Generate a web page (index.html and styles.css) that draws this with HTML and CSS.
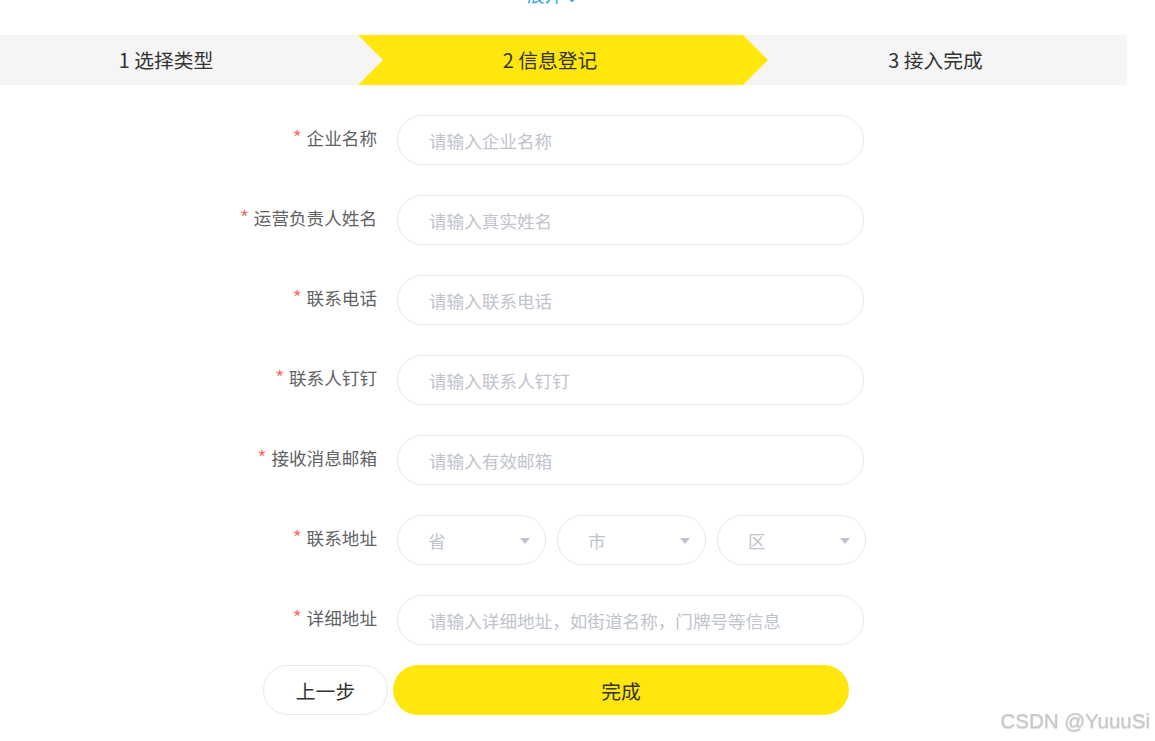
FILE: index.html
```html
<!DOCTYPE html>
<html lang="zh-CN">
  <head>
    <meta charset="UTF-8" />
    <meta name="viewport" content="width=device-width, initial-scale=1.0" />
    <title>信息登记</title>
    <link rel="stylesheet" href="styles.css">
  </head>
  <body>
    <div class="page">
      <!-- Toggle link (scrolled partly off) -->
      <div class="toggle">
        <a class="toggle-link">展开 <span class="chev">&#8964;</span></a>
      </div>

      <!-- Steps -->
      <div class="steps">
        <div class="step step-first">1 选择类型</div>
        <div class="step step-active">2 信息登记</div>
        <div class="step step-last">3 接入完成</div>
      </div>

      <!-- Form -->
      <form class="form">
        <div class="form-row">
          <label class="form-label"><span class="req">*</span>企业名称</label>
          <input class="field" type="text" placeholder="请输入企业名称" />
        </div>
        <div class="form-row">
          <label class="form-label"><span class="req">*</span>运营负责人姓名</label>
          <input class="field" type="text" placeholder="请输入真实姓名" />
        </div>
        <div class="form-row">
          <label class="form-label"><span class="req">*</span>联系电话</label>
          <input class="field" type="text" placeholder="请输入联系电话" />
        </div>
        <div class="form-row">
          <label class="form-label"><span class="req">*</span>联系人钉钉</label>
          <input class="field" type="text" placeholder="请输入联系人钉钉" />
        </div>
        <div class="form-row">
          <label class="form-label"><span class="req">*</span>接收消息邮箱</label>
          <input class="field" type="text" placeholder="请输入有效邮箱" />
        </div>
        <div class="form-row">
          <label class="form-label"><span class="req">*</span>联系地址</label>
          <div class="selects">
            <div class="select"><span>省</span><i class="caret"></i></div>
            <div class="select"><span>市</span><i class="caret"></i></div>
            <div class="select"><span>区</span><i class="caret"></i></div>
          </div>
        </div>
        <div class="form-row">
          <label class="form-label"><span class="req">*</span>详细地址</label>
          <input class="field" type="text" placeholder="请输入详细地址，如街道名称，门牌号等信息" />
        </div>

        <div class="actions">
          <button type="button" class="btn btn-prev">上一步</button>
          <button type="button" class="btn btn-done">完成</button>
        </div>
      </form>
    </div>

    <div class="watermark">CSDN @YuuuSi</div>
  </body>
</html>
```

FILE: styles.css
```css
/* Basic Styles */
body {
  margin: 0;
  padding: 0;
  background-color: #fff;
  font-family: "Noto Sans CJK SC", "Liberation Sans", sans-serif;
  color: #333;
}

.page {
  width: 1127px;
}

.toggle {
  height: 35px;
  overflow: hidden;
  padding-left: 527px;
}

.toggle-link {
  display: block;
  margin-top: -15px;
  line-height: 20px;
  font-size: 17.6px;
  color: #1ea0f5;
}

.chev {
  font-size: 14px;
}

/* Steps */
.steps {
  display: flex;
  height: 50px;
  background-color: #f5f5f5;
  font-size: 19.8px;
  line-height: 50px;
  color: #333;
}

.step {
  box-sizing: border-box;
  text-align: center;
}

.step-first {
  width: 358px;
  padding-right: 26px;
}

.step-active {
  width: 410px;
  padding-right: 26px;
  background-color: #ffe60c;
  clip-path: polygon(0 0, 385px 0, 100% 50%, 385px 100%, 0 100%, 25px 50%);
}

.step-last {
  flex: 1;
  padding-right: 24px;
}

/* Form */
.form {
  margin-top: 30px;
}

.form-row {
  display: flex;
  margin-bottom: 30px;
}

.form-label {
  width: 377px;
  margin-right: 20px;
  text-align: right;
  font-size: 17.6px;
  line-height: 44px;
  color: #606266;
}

.req {
  color: #f56c6c;
  margin-right: 5px;
  font-size: 19px;
}

.field {
  box-sizing: border-box;
  width: 467px;
  height: 50px;
  padding: 0 20px 0 31px;
  border: 1px solid #e6e8ec;
  border-radius: 25px;
  font-family: inherit;
  font-size: 17.6px;
  color: #606266;
  outline: none;
}

.field::placeholder {
  color: #c0c4cc;
}

.selects {
  display: flex;
  gap: 11px;
}

.select {
  box-sizing: border-box;
  width: 149px;
  height: 50px;
  padding: 0 15px 0 30px;
  border: 1px solid #e6e8ec;
  border-radius: 25px;
  display: flex;
  align-items: center;
  justify-content: space-between;
  font-size: 17.6px;
  color: #c0c4cc;
}

.caret {
  width: 0;
  height: 0;
  border-left: 5px solid transparent;
  border-right: 5px solid transparent;
  border-top: 6px solid #c0c4cc;
  margin-top: 2px;
}

/* Buttons */
.actions {
  display: flex;
  gap: 5px;
  padding-left: 263px;
  margin-top: -10px;
}

.btn {
  height: 50px;
  border-radius: 25px;
  font-family: inherit;
  font-size: 19.8px;
  color: #333;
  cursor: pointer;
}

.btn-prev {
  width: 125px;
  background-color: #fff;
  border: 1px solid #e6e8ec;
}

.btn-done {
  width: 456px;
  background-color: #ffe60c;
  border: none;
}

.watermark {
  position: absolute;
  right: 5px;
  bottom: 8px;
  font-family: "Liberation Sans", Arial, sans-serif;
  font-size: 20.5px;
  color: #c8c8c8;
  text-shadow: 0 1px 1px rgba(0, 0, 0, 0.15);
}
```
